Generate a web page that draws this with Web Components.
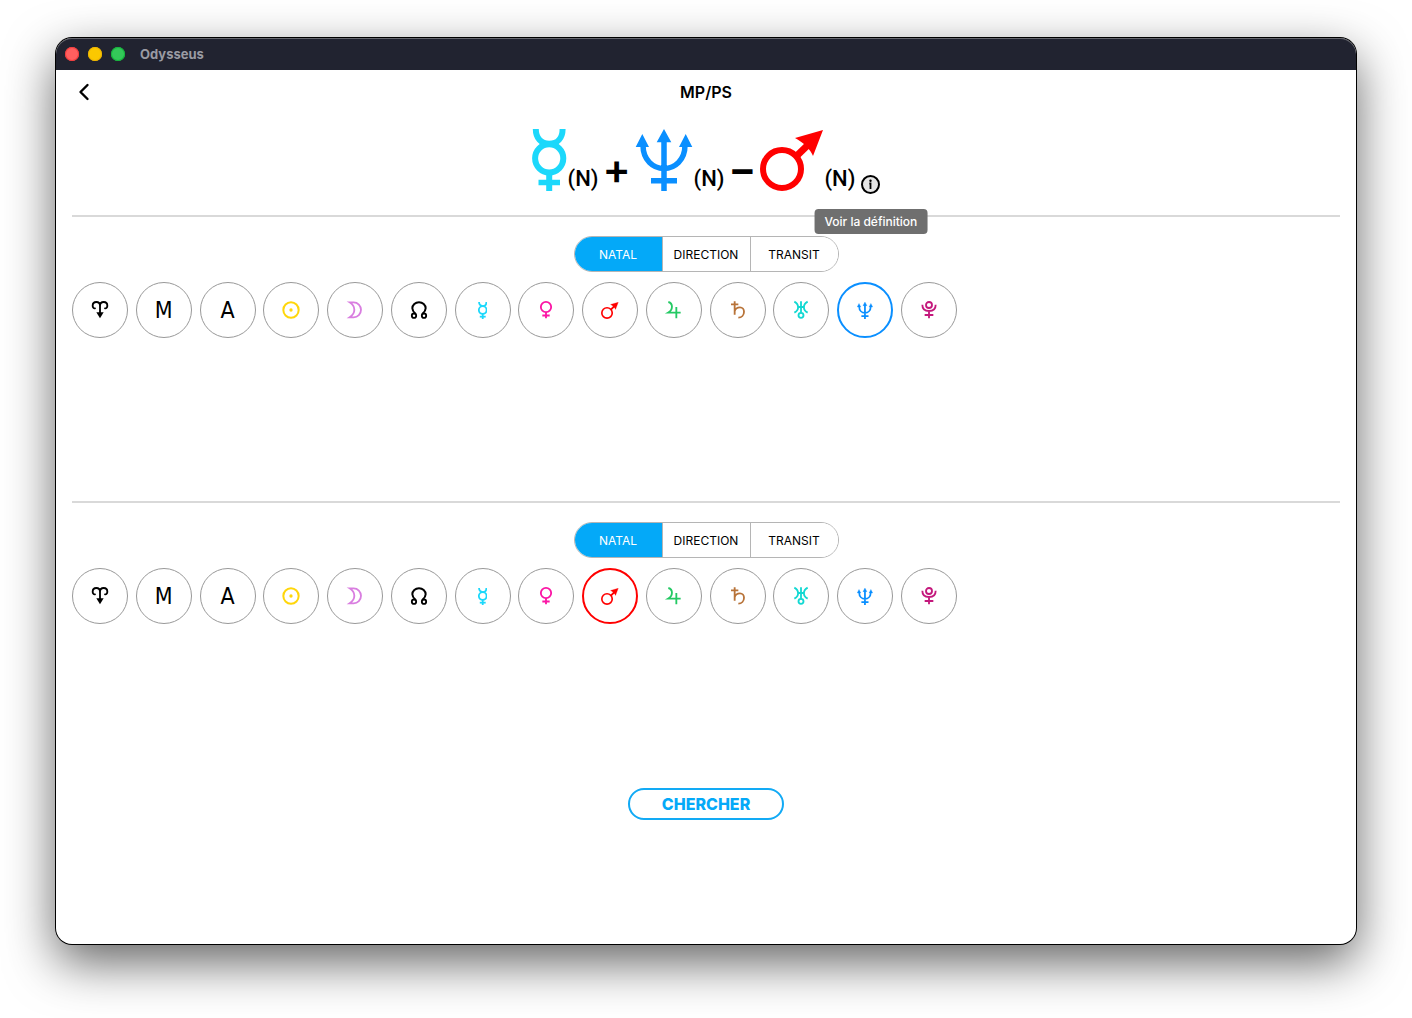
<!DOCTYPE html>
<html lang="fr">
<head>
<meta charset="utf-8">
<title>Odysseus</title>
<style>
  html, body { margin: 0; }
  body {
    min-height: 100vh; box-sizing: border-box; display: flex;
    padding: 38px 56px 74px; background: #fff; color: #000; overflow: hidden;
    font-family: Inter, "Liberation Sans", sans-serif;
  }
</style>
</head>
<body>
<ody-window name="Odysseus">
  <mp-page></mp-page>
</ody-window>

<script>
const line = 'fill="none" stroke="currentColor" stroke-width="5.500"';
// name: [label, colour, viewBox, drawing]
const GLYPHS = {
  aries: ['Point vernal', '#000', '0 0 60 60', `<path ${line} stroke-linecap="round" d="M30 42V17C30 9 24 6 19 6 11 6 8 12 8 17 8 22 11 26 15 25M30 17C30 9 36 6 41 6 49 6 52 12 52 17 52 22 49 26 45 25"/><path fill="currentColor" d="M19 37H41L30 55Z"/>`],
  M: ['Milieu du ciel', '#000'],
  A: ['Ascendant', '#000'],
  sun: ['Soleil', '#ffd60a', '0 0 60 60', `<circle ${line} cx="30" cy="30" r="23" style="stroke-width:6"/><circle cx="30" cy="30" r="5" fill="currentColor"/>`],
  moon: ['Lune', '#d97ee0', '0 0 60 60', `<path ${line} d="M14 7H26A22 22.500 0 0 1 26 52H14C23 46 28 39 28 29.500S23 13 14 7Z"/>`],
  node: ['Nœud nord', '#000', '0 0 60 60', `<path ${line} style="stroke-width:6" d="M20 42C13 36 10 31 10 25A20 18.500 0 0 1 50 25C50 31 47 36 40 42"/><g ${line}><circle cx="15" cy="47" r="6.500"/><circle cx="45" cy="47" r="6.500"/></g>`],
  mercury: ['Mercure', '#1cd8fb', '0 0 35 62', `<g ${line}><path stroke-width="6" d="M3.800 0C3.800 9 9 14.800 17.200 14.800S30.600 9 30.600 0"/><circle stroke-width="6" cx="17.200" cy="29.300" r="14.100"/><path stroke-width="6" d="M17.200 43V62"/><path d="M6.500 53.500H28"/></g>`],
  venus: ['Vénus', '#fb16a5', '0 0 60 60', `<g ${line}><circle cx="30" cy="21" r="15.500"/><path d="M30 36V55M19 46.500H41"/></g>`],
  mars: ['Mars', '#ff0000', '0 0 63 62', `<circle ${line} cx="22" cy="40" r="19" style="stroke-width:6"/><path ${line} style="stroke-width:7" d="M35 28.500 50 14"/><path fill="currentColor" d="M63 1 53 27C51 21 43 13 35 9Z"/>`],
  jupiter: ['Jupiter', '#24c964', '0 0 60 60', `<path ${line} d="M13 6C28 10 27 30 13 38H50M37 21V55"/>`],
  saturn: ['Saturne', '#b87339', '0 0 60 60', `<path ${line} d="M20 4V44M9 13H31M20 34C22 26 29 22 36 22 43 22 48 28 48 35 48 45 41 53 31 53"/>`],
  uranus: ['Uranus', '#12d8d2', '0 0 60 60', `<g ${line}><path d="M10 5C25 13 25 30 10 38M50 5C35 13 35 30 50 38M30 4V38M20 21H40"/><circle cx="30" cy="46" r="7.500"/></g>`],
  neptune: ['Neptune', '#0a8fff', '0 0 58 62', `<path ${line} d="M8 16C8 31 18 39.500 29 39.500S50 31 50 16M29 10V62M16 51.800H42"/><path fill="currentColor" d="M7.300 5 14 18H.7ZM29 0 36.300 13.300H21.700ZM50.700 5 57.300 18H44Z"/>`],
  pluto: ['Pluton', '#c4187c', '0 0 60 60', `<g ${line}><circle cx="30" cy="15" r="9"/><path d="M10 14C10 27 18 33 30 33S50 27 50 14M30 33V55M17 45H43"/></g>`]
};

class Base extends HTMLElement {
  constructor() { super(); this.attachShadow({ mode: 'open' }); }
  connectedCallback() { this.shadowRoot.innerHTML = this.render(); }
}

customElements.define('ody-window', class extends Base {
  render() {
    return `<style>
      :host { flex: 1; display: flex; flex-direction: column; min-width: 0; border-radius: 16px; background: #fff;
        box-shadow: 0 0 0 1px #000, 0 18px 50px rgba(0,0,0,.62); }
      header { display: flex; align-items: center; gap: 9px; height: 32px; padding: 0 9px; box-sizing: border-box;
        background: #212330; border-radius: 16px 16px 0 0; box-shadow: inset 0 1px 0 #66676e; color: #9a9ba3; }
      i { width: 14px; height: 14px; border-radius: 50%; background: var(--c); box-shadow: inset 0 0 0 1px var(--e); }
      b { font-size: 13px; line-height: 16px; font-weight: 700; margin-left: 6px; }
    </style>
    <header><i style="--c:#ff5f5f;--e:#f23c3c"></i><i style="--c:#fbc800;--e:#eeb400"></i><i style="--c:#34c759;--e:#14b53c"></i><b>${this.getAttribute('name')}</b></header>
    <slot></slot>`;
  }
});

customElements.define('astro-glyph', class extends Base {
  render() {
    const name = this.getAttribute('name');
    const [, color, box, art] = GLYPHS[name];
    const large = this.hasAttribute('large');
    const h = large ? 62 : box === '0 0 60 60' ? 20 : 17;
    return `<style>
      :host { display: flex; color: ${color}; }
      svg { display: block; height: ${h}px; }
      ${large || h === 20 ? '' : 'svg * { stroke-width: 6.500px; } svg [fill=currentColor] { stroke: currentColor; stroke-width: 1px; }'}
      span { font: 400 23px/24px "DejaVu Sans Condensed", "DejaVu Sans", sans-serif; }
    </style>` + (art ? `<svg viewBox="${box}" aria-hidden="true">${art}</svg>` : `<span>${name}</span>`);
  }
});

customElements.define('formula-view', class extends Base {
  render() {
    return `<style>
      :host { display: flex; justify-content: center; align-items: flex-end; height: 77px; padding-bottom: 24px; }
      .term { display: flex; align-items: flex-end; gap: 1px; }
      .frame { font: 500 22px/24px Roboto, sans-serif; }
      .op { width: 36px; text-align: center; font-size: 42px; line-height: 44px; font-weight: 600; }
      .info { position: relative; display: flex; margin: 0 0 -3px 6px; }
      button { padding: 0; border: 0; background: none; display: flex; border-radius: 50%; color: inherit; }
      [role=tooltip] { position: absolute; top: 34px; left: 50%; transform: translateX(-50%); padding: 4px 10px;
        border-radius: 4px; background: #6f6f6f; color: #fff; font-size: 12px; line-height: 17px; font-weight: 500; white-space: nowrap; }
    </style>
    <div class="term"><astro-glyph name="mercury" large></astro-glyph><span class="frame">(N)</span></div>
    <span class="op">+</span>
    <div class="term"><astro-glyph name="neptune" large></astro-glyph><span class="frame">(N)</span></div>
    <span class="op">−</span>
    <div class="term"><astro-glyph name="mars" large></astro-glyph><span class="frame">(N)</span></div>
    <div class="info">
      <button type="button" aria-labelledby="tip"><svg width="19" height="19" viewBox="0 0 19 19" aria-hidden="true"><circle cx="9.500" cy="9.500" r="8.500" fill="#e6e6e6" stroke="#000" stroke-width="2"/><circle cx="9.500" cy="5.700" r="1.200"/><path d="M8.300 8.500H9.500V14" fill="none" stroke="#000" stroke-width="1.800"/></svg></button>
      <span role="tooltip" id="tip">Voir la définition</span>
    </div>`;
  }
});

customElements.define('segment-control', class extends Base {
  render() {
    return `<style>
      :host { display: flex; box-sizing: border-box; height: 36px; width: 265px; border: 1px solid #b5b5b5; border-radius: 18px; overflow: hidden; }
      button { flex: 1; padding: 2px 0 0; border: 0; background: #fff; color: #000; font: 400 12px/16px Inter, sans-serif; }
      button + button { border-left: 1px solid #b5b5b5; }
      button[aria-pressed=true] { background: #04a9f8; color: #fff; }
    </style>` + ['NATAL', 'DIRECTION', 'TRANSIT'].map((t, i) => `<button type="button" aria-pressed="${i === 0}">${t}</button>`).join('');
  }
});

customElements.define('planet-picker', class extends Base {
  render() {
    const sel = this.getAttribute('selected');
    return `<style>
      :host { display: flex; flex-direction: column; align-items: center; gap: 10px; box-sizing: border-box;
        min-height: 286px; padding-top: 19px; border-top: 2px solid #d9d9d9; }
      .list { align-self: flex-start; display: flex; justify-content: space-between; width: 100%; max-width: 885px; }
      button { width: 56px; height: 56px; box-sizing: border-box; padding: 0; border: 1px solid #999; border-radius: 50%;
        background: #fff; display: flex; align-items: center; justify-content: center; }
      button[aria-pressed=true] { border: 2px solid var(--c); }
    </style>
    <segment-control></segment-control>
    <div class="list">` + Object.entries(GLYPHS).map(([n, g]) =>
      `<button type="button" aria-label="${g[0]}" aria-pressed="${n === sel}" style="--c:${g[1]}"><astro-glyph name="${n}"></astro-glyph></button>`).join('') + `</div>`;
  }
});

customElements.define('mp-page', class extends Base {
  render() {
    return `<style>
      :host { display: block; padding: 0 16px; }
      nav { display: grid; grid-template-columns: 24px 1fr 24px; align-items: center; height: 44px; }
      h1 { margin: 0; text-align: center; font-size: 16px; line-height: 20px; font-weight: 600; }
      .back { display: flex; justify-content: center; padding: 0; border: 0; background: none; color: inherit; }
      footer { display: flex; justify-content: center; padding-top: 1px; }
      .go { width: 156px; height: 32px; padding: 0; border: 2px solid #12aaf5; border-radius: 16px; background: #fff; color: #04a9f8;
        font: 800 16px/20px Inter, sans-serif; }
    </style>
    <nav><button class="back" type="button" aria-label="Retour"><svg width="12" height="18" viewBox="0 0 12 18" aria-hidden="true"><path d="M9.500 2 2.500 9 9.500 16" fill="none" stroke="currentColor" stroke-width="2.400" stroke-linecap="round" stroke-linejoin="round"/></svg></button><h1>MP/PS</h1></nav>
    <formula-view></formula-view>
    <planet-picker selected="neptune"></planet-picker>
    <planet-picker selected="mars"></planet-picker>
    <footer><button class="go" type="button">CHERCHER</button></footer>`;
  }
});
</script>
</body>
</html>
